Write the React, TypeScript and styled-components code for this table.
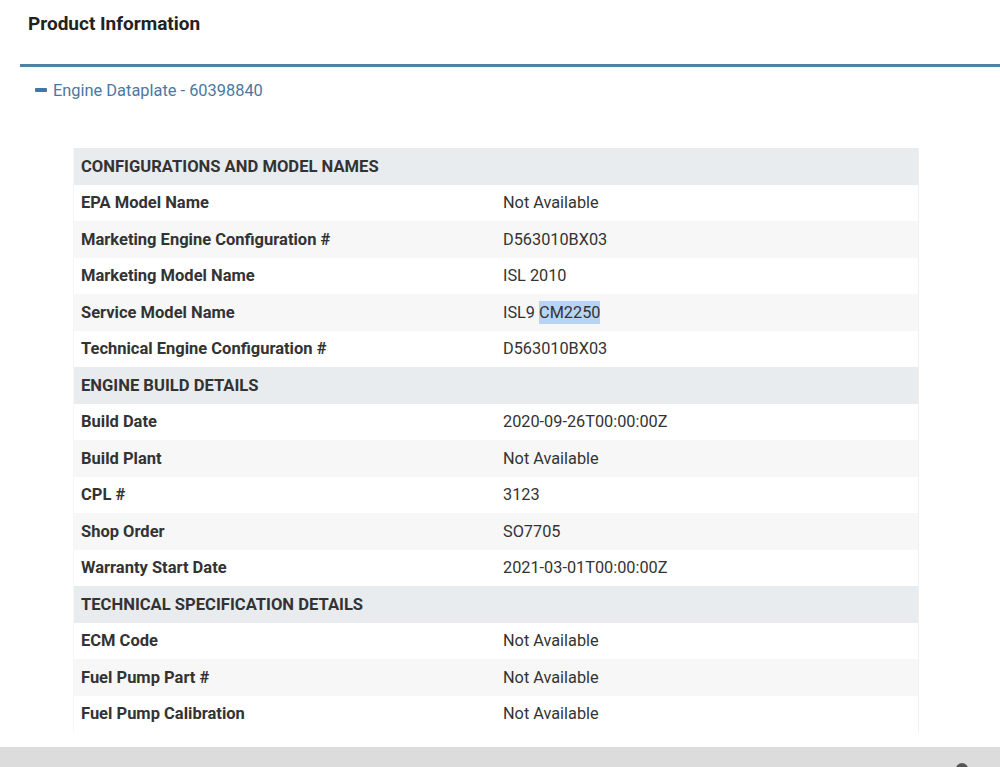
import React from "react";
import styled, { createGlobalStyle } from "styled-components";

const Global = createGlobalStyle`
  html, body { margin: 0; padding: 0; background: #ffffff; }
  body { font-family: Roboto, "Liberation Sans", Arial, sans-serif; color: #333; overflow: hidden; }
`;

const Page = styled.div`
  width: 1000px;
  height: 767px;
  display: flex;
  flex-direction: column;
  position: relative;
  overflow: hidden;
`;

const Content = styled.div`
  flex: 1;
  display: flex;
  flex-direction: column;
`;

const TitleBar = styled.div`
  height: 64px;
  padding: 12px 0 0 28px;
  box-sizing: border-box;
`;

const Title = styled.h1`
  margin: 0;
  font-size: 19px;
  line-height: 23px;
  font-weight: 700;
  color: #222;
`;

const Panel = styled.section`
  margin-left: 20px;
  border-top: 3px solid #4f82a9;
  display: flex;
  flex-direction: column;
`;

const Toggle = styled.div`
  display: flex;
  align-items: center;
  gap: 6px;
  padding: 12px 0 0 15px;
  height: 22px;
  color: #4a78a3;
  font-size: 16.4px;
`;

const Minus = styled.span`
  width: 12px;
  height: 4px;
  border-radius: 1px;
  background: #3f77a6;
`;

const Table = styled.div`
  margin: 47px 0 0 54px;
  width: 844px;
  display: flex;
  flex-direction: column;
  box-shadow: 1px 0 0 #f0f0f0, -1px 0 0 #f6f6f6;
`;

const Row = styled.div<{ $kind: "head" | "odd" | "even" }>`
  height: 36.5px;
  display: grid;
  grid-template-columns: 422px 1fr;
  align-items: center;
  padding-left: 7px;
  background: ${(p) =>
    p.$kind === "head" ? "#e9ecef" : p.$kind === "even" ? "#f7f7f7" : "#ffffff"};
  font-size: 16.3px;
  color: #333;
`;

const HeadCell = styled.div`
  font-weight: 700;
  font-size: 16.6px;
  text-transform: uppercase;
  color: #333;
`;

const Label = styled.div`
  font-weight: 700;
  font-size: 16.5px;
`;

const Value = styled.div``;

const Mark = styled.span`
  background: #b6d5f5;
  padding: 2px 0;
`;

const BottomBar = styled.div`
  height: 20px;
  background: #dcdcdc;
  display: flex;
  justify-content: flex-end;
  padding-right: 32px;
`;

const Knob = styled.span`
  width: 12px;
  height: 12px;
  border-radius: 50%;
  background: #555;
  margin-top: 16px;
`;

type Item = { head: string } | { label: string; value: React.ReactNode };

const items: Item[] = [
  { head: "Configurations and Model Names" },
  { label: "EPA Model Name", value: "Not Available" },
  { label: "Marketing Engine Configuration #", value: "D563010BX03" },
  { label: "Marketing Model Name", value: "ISL 2010" },
  {
    label: "Service Model Name",
    value: (
      <>
        ISL9 <Mark>CM2250</Mark>
      </>
    ),
  },
  { label: "Technical Engine Configuration #", value: "D563010BX03" },
  { head: "Engine Build Details" },
  { label: "Build Date", value: "2020-09-26T00:00:00Z" },
  { label: "Build Plant", value: "Not Available" },
  { label: "CPL #", value: "3123" },
  { label: "Shop Order", value: "SO7705" },
  { label: "Warranty Start Date", value: "2021-03-01T00:00:00Z" },
  { head: "Technical Specification Details" },
  { label: "ECM Code", value: "Not Available" },
  { label: "Fuel Pump Part #", value: "Not Available" },
  { label: "Fuel Pump Calibration", value: "Not Available" },
];

export default function App() {
  let idx = 0;
  return (
    <Page>
      <Global />
      <Content>
        <TitleBar>
          <Title>Product Information</Title>
        </TitleBar>
        <Panel>
          <Toggle>
            <Minus />
            <span>Engine Dataplate - 60398840</span>
          </Toggle>
          <Table>
            {items.map((it, i) => {
              if ("head" in it) {
                idx = 0;
                return (
                  <Row key={i} $kind="head">
                    <HeadCell>{it.head}</HeadCell>
                  </Row>
                );
              }
              idx += 1;
              return (
                <Row key={i} $kind={idx % 2 === 0 ? "even" : "odd"}>
                  <Label>{it.label}</Label>
                  <Value>{it.value}</Value>
                </Row>
              );
            })}
          </Table>
        </Panel>
      </Content>
      <BottomBar>
        <Knob />
      </BottomBar>
    </Page>
  );
}
